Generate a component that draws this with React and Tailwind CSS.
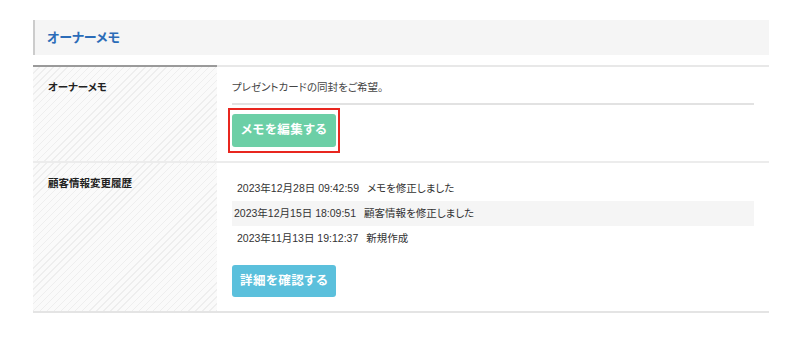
import React from "react";

const history = [
  { at: "2023年12月28日 09:42:59", text: "メモを修正しました" },
  { at: "2023年12月15日 18:09:51", text: "顧客情報を修正しました" },
  { at: "2023年11月13日 19:12:37", text: "新規作成" },
];

const stripes =
  "bg-[repeating-linear-gradient(135deg,#fafafa_0px,#fafafa_4px,#eeeeee_4px,#eeeeee_5px)]";

export default function App() {
  return (
    <div
      className="w-[800px] h-[338px] bg-white pl-[33px] pt-[20px] text-[#333] [font-feature-settings:'palt']"
      style={{ fontFamily: '"Liberation Sans", "Noto Sans CJK JP", sans-serif' }}
    >
      <div className="w-[736px]">
        {/* Section title */}
        <div className="h-[35px] bg-[#f5f5f5] border-l-2 border-[#ccc] flex items-center pl-[12px]">
          <h2 className="text-[13px] font-bold text-[#2b6cb8]">オーナーメモ</h2>
        </div>

        {/* Table */}
        <div className="mt-[10px] border-b-2 border-[#e4e4e4]">
          {/* Memo row */}
          <div className="flex border-t-2 border-[#e8e8e8]">
            <div className={`w-[184px] shrink-0 -mt-[2px] border-t-2 border-[#9a9a9a] pl-[15px] pt-[13px] ${stripes}`}>
              <span className="block text-[10.5px] leading-[14px] font-bold text-[#222]">オーナーメモ</span>
            </div>
            <div className="flex-1 pl-[15px] pr-[15px] pt-[13px] pb-[8px]">
              <p className="text-[10.5px] text-[#444] leading-[14px] pb-[9px] border-b-2 border-[#e2e2e2]">
                プレゼントカードの同封をご希望。
              </p>
              <div className="mt-[3px] -ml-[4px] inline-block border-2 border-[#e8261f] px-[2px] py-[4px]">
                <button className="block w-[104px] h-[33px] rounded-[3px] bg-[#6ccfa6] text-white text-[12.5px] font-semibold tracking-[0.5px]">
                  メモを編集する
                </button>
              </div>
            </div>
          </div>

          {/* History row */}
          <div className="flex border-t-2 border-[#ececec]">
            <div className={`w-[184px] shrink-0 pl-[15px] pt-[13px] ${stripes}`}>
              <span className="block text-[10.5px] leading-[14px] font-bold text-[#222]">顧客情報変更履歴</span>
            </div>
            <div className="flex-1 pl-[15px] pr-[15px] pt-[13px] pb-[14px]">
              <div className="flex flex-col">
                {history.map((h, i) => (
                  <div
                    key={h.at}
                    className={`h-[25px] flex items-center text-[10.5px] text-[#333] ${
                      i === 1 ? "bg-[#f5f5f5] pl-[2px]" : "pl-[5px]"
                    }`}
                  >
                    <span>{h.at}</span>
                    <span className="ml-[8px]">{h.text}</span>
                  </div>
                ))}
              </div>
              <button className="block mt-[14px] w-[104px] h-[32px] rounded-[3px] bg-[#5bc0dc] text-white text-[12.5px] font-semibold tracking-[0.5px]">
                詳細を確認する
              </button>
            </div>
          </div>
        </div>
      </div>
    </div>
  );
}
